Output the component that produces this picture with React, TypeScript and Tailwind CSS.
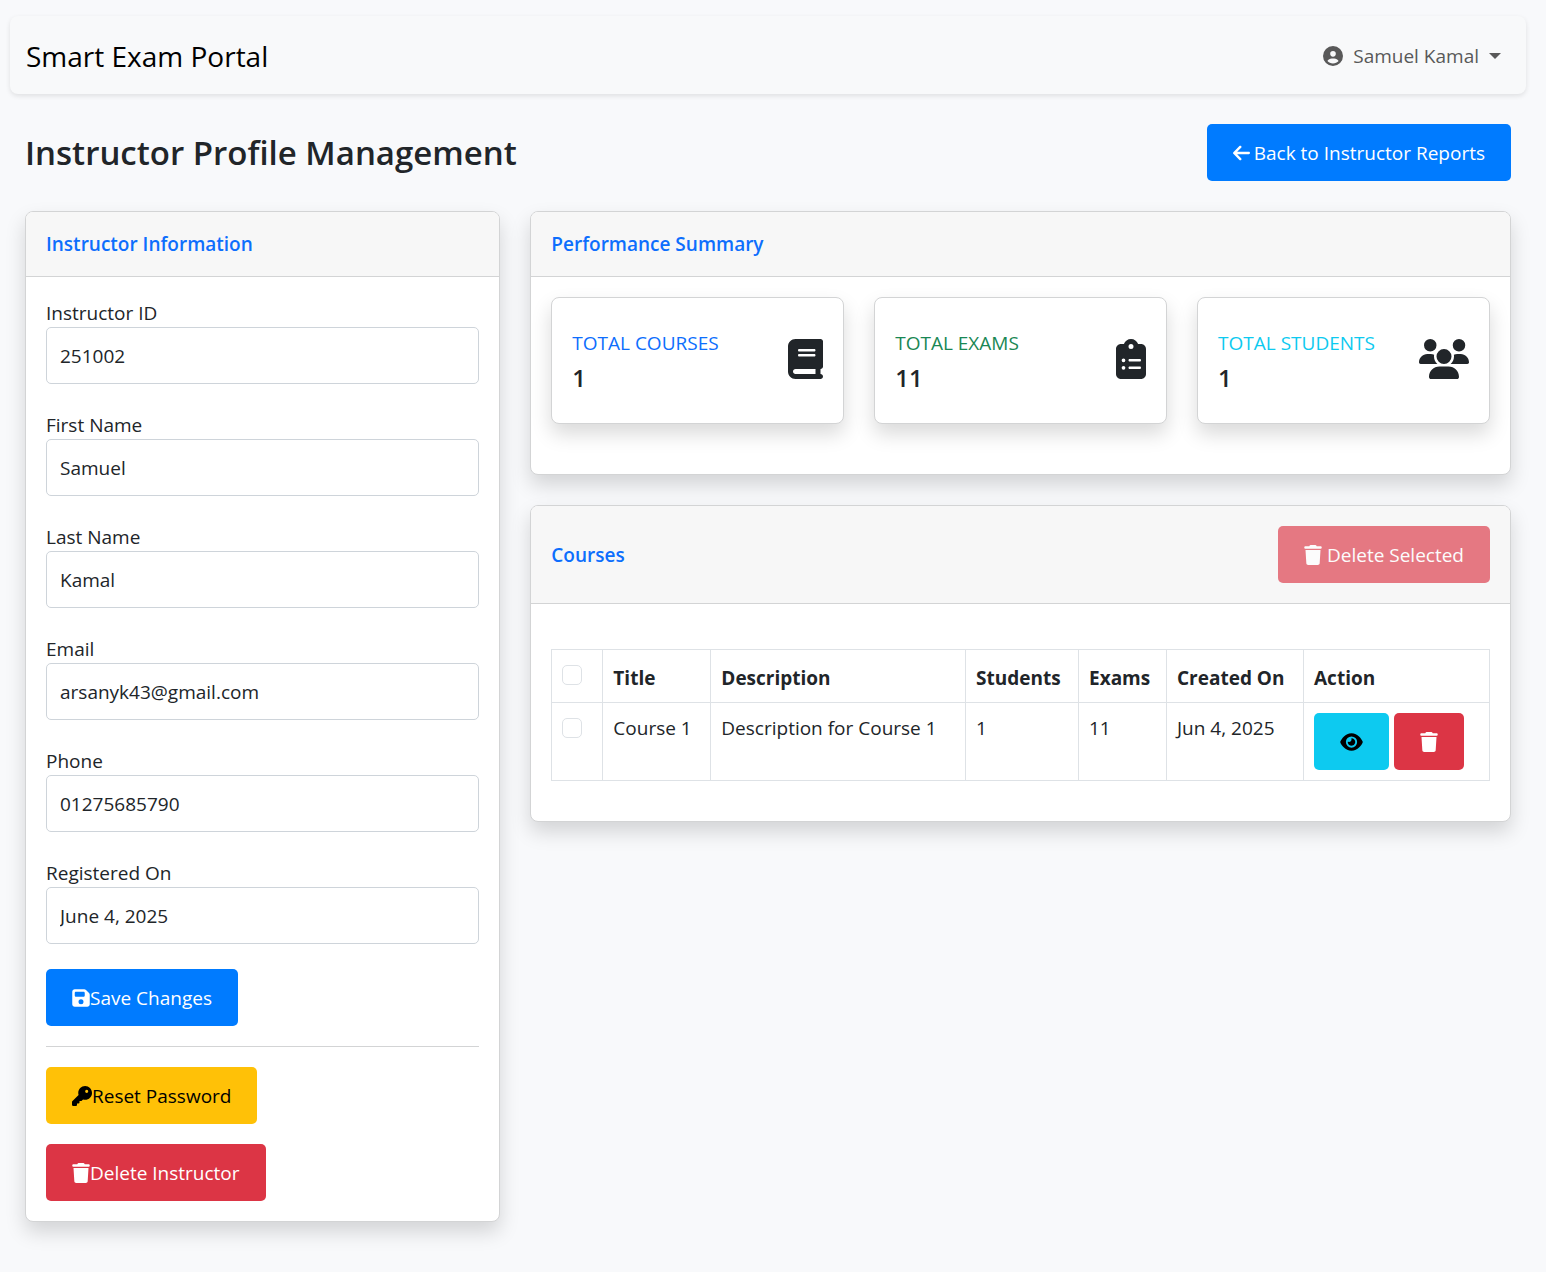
import type { ReactNode } from "react";
import type { IconType } from "react-icons";
import {
  FaArrowLeft,
  FaBook,
  FaCircleUser,
  FaClipboardList,
  FaEye,
  FaFloppyDisk,
  FaKey,
  FaTrash,
  FaUsers,
} from "react-icons/fa6";

const fields = [
  { id: "instructor-id", label: "Instructor ID", value: "251002" },
  { id: "first-name", label: "First Name", value: "Samuel" },
  { id: "last-name", label: "Last Name", value: "Kamal" },
  { id: "email", label: "Email", value: "arsanyk43@gmail.com" },
  { id: "phone", label: "Phone", value: "01275685790" },
  { id: "registered-on", label: "Registered On", value: "June 4, 2025" },
];

const stats: { label: string; value: string; color: string; icon: IconType; iconWidth: string }[] = [
  { label: "TOTAL COURSES", value: "1", color: "text-[#0d6efd]", icon: FaBook, iconWidth: "w-[35px]" },
  { label: "TOTAL EXAMS", value: "11", color: "text-[#198754]", icon: FaClipboardList, iconWidth: "w-[30px]" },
  { label: "TOTAL STUDENTS", value: "1", color: "text-[#0dcaf0]", icon: FaUsers, iconWidth: "w-[50px]" },
];

const button =
  "inline-flex h-[57px] cursor-pointer items-center rounded-[5px] px-[26px] whitespace-nowrap";
const cardFrame =
  "rounded-[8px] border border-[#d3d4d5] bg-white shadow-[0_10px_20px_rgba(0,0,0,0.15)]";
const cell = "border border-[#dee2e6] px-[10px] text-left";
const checkbox =
  "block size-5 appearance-none rounded-[5px] border border-[#dee2e6] bg-white checked:bg-[#0d6efd]";

function Card({ title, action, children }: { title: string; action?: ReactNode; children: ReactNode }) {
  return (
    <section className={cardFrame}>
      <header className="flex items-center justify-between rounded-t-[7px] border-b border-[#d3d4d5] bg-[#f7f7f7] p-5">
        <h2 className="leading-6 font-semibold text-[#0d6efd]">{title}</h2>
        {action}
      </header>
      {children}
    </section>
  );
}

export default function App() {
  return (
    <div className="min-h-screen bg-[#f8f9fb] pt-4 pr-5 pb-[50px] pl-[10px] font-['Open_Sans','Noto_Sans',sans-serif] text-[19px] leading-[30px] text-[#212529]">
      <nav className="flex h-[78px] items-center justify-between rounded-[8px] bg-[#f8f9fa] px-4 pt-[2px] shadow-[0_2px_5px_rgba(0,0,0,0.1)]">
        <a href="#" className="text-[28px] text-black">
          Smart Exam Portal
        </a>
        <button type="button" className="flex cursor-pointer items-center gap-[10px] pr-[9px] text-[#595959]">
          <FaCircleUser className="size-5" />
          Samuel Kamal
          <svg viewBox="0 0 12 6" className="h-[6px] w-3 fill-current" aria-hidden="true">
            <path d="M0 0h12L6 6z" />
          </svg>
        </button>
      </nav>

      <main className="px-[15px] pt-[30px]">
        <div className="mb-[30px] flex items-center justify-between">
          <h1 className="text-[33px] leading-[42px] font-semibold">Instructor Profile Management</h1>
          <a href="#" className={`${button} gap-1 bg-[#007bff] text-white`}>
            <FaArrowLeft className="h-5 w-[17px]" />
            Back to Instructor Reports
          </a>
        </div>

        <div className="grid grid-cols-3 items-start gap-[30px]">
          <Card title="Instructor Information">
            <div className="p-5">
              <form>
                {fields.map((f) => (
                  <div key={f.id} className="mb-[25px]">
                    <label htmlFor={f.id} className="block pt-[2px] leading-7">
                      {f.label}
                    </label>
                    <input
                      id={f.id}
                      type="text"
                      defaultValue={f.value}
                      className="block h-[57px] w-full rounded-[5px] border border-[#ced4da] bg-white px-[13px]"
                    />
                  </div>
                ))}
                <button type="button" className={`${button} bg-[#007bff] text-white`}>
                  <FaFloppyDisk className="h-5 w-[18px]" />
                  Save Changes
                </button>
              </form>
              <hr className="my-5 border-[#d3d4d5]" />
              <div className="flex flex-col items-start gap-5">
                <button type="button" className={`${button} bg-[#ffc107] text-black`}>
                  <FaKey className="size-5" />
                  Reset Password
                </button>
                <button type="button" className={`${button} bg-[#dc3545] text-white`}>
                  <FaTrash className="h-5 w-[18px]" />
                  Delete Instructor
                </button>
              </div>
            </div>
          </Card>

          <div className="col-span-2 flex flex-col gap-[30px]">
            <Card title="Performance Summary">
              <div className="grid grid-cols-3 gap-[30px] px-5 pt-5 pb-[50px]">
                {stats.map(({ label, value, color, icon: Icon, iconWidth }) => (
                  <div key={label} className={`${cardFrame} flex items-center justify-between px-5 py-[30px]`}>
                    <div>
                      <h3 className={color}>{label}</h3>
                      <p className="mt-[5px] text-[24px] font-semibold">{value}</p>
                    </div>
                    <Icon className={`mb-1 h-10 ${iconWidth}`} />
                  </div>
                ))}
              </div>
            </Card>

            <Card
              title="Courses"
              action={
                <button type="button" disabled className={`${button} gap-[5px] bg-[#dc3545] text-white opacity-65`}>
                  <FaTrash className="h-5 w-[18px]" />
                  Delete Selected
                </button>
              }
            >
              <div className="px-5 pt-[45px] pb-10">
                <table className="w-full table-fixed border-collapse">
                  <colgroup>
                    <col className="w-[51px]" />
                    <col className="w-[108px]" />
                    <col />
                    <col className="w-[113px]" />
                    <col className="w-[88px]" />
                    <col className="w-[137px]" />
                    <col className="w-[186px]" />
                  </colgroup>
                  <thead>
                    <tr className="h-[53px] align-bottom font-bold">
                      <th className={`${cell} pt-[15px] align-top`}>
                        <input type="checkbox" aria-label="Select all courses" className={checkbox} />
                      </th>
                      <th className={`${cell} pb-[9px]`}>Title</th>
                      <th className={`${cell} pb-[9px]`}>Description</th>
                      <th className={`${cell} pb-[9px]`}>Students</th>
                      <th className={`${cell} pb-[9px]`}>Exams</th>
                      <th className={`${cell} pb-[9px]`}>Created On</th>
                      <th className={`${cell} pb-[9px]`}>Action</th>
                    </tr>
                  </thead>
                  <tbody>
                    <tr className="align-top">
                      <td className={`${cell} py-[15px]`}>
                        <input type="checkbox" aria-label="Select Course 1" className={checkbox} />
                      </td>
                      <td className={`${cell} py-[10px]`}>Course 1</td>
                      <td className={`${cell} py-[10px]`}>Description for Course 1</td>
                      <td className={`${cell} py-[10px]`}>1</td>
                      <td className={`${cell} py-[10px]`}>11</td>
                      <td className={`${cell} py-[10px]`}>Jun 4, 2025</td>
                      <td className={`${cell} py-[10px]`}>
                        <div className="flex gap-[5px]">
                          <button type="button" aria-label="View course" className={`${button} bg-[#0dcaf0] text-black`}>
                            <FaEye className="h-5 w-[23px]" />
                          </button>
                          <button type="button" aria-label="Delete course" className={`${button} bg-[#dc3545] text-white`}>
                            <FaTrash className="h-5 w-[18px]" />
                          </button>
                        </div>
                      </td>
                    </tr>
                  </tbody>
                </table>
              </div>
            </Card>
          </div>
        </div>
      </main>
    </div>
  );
}
